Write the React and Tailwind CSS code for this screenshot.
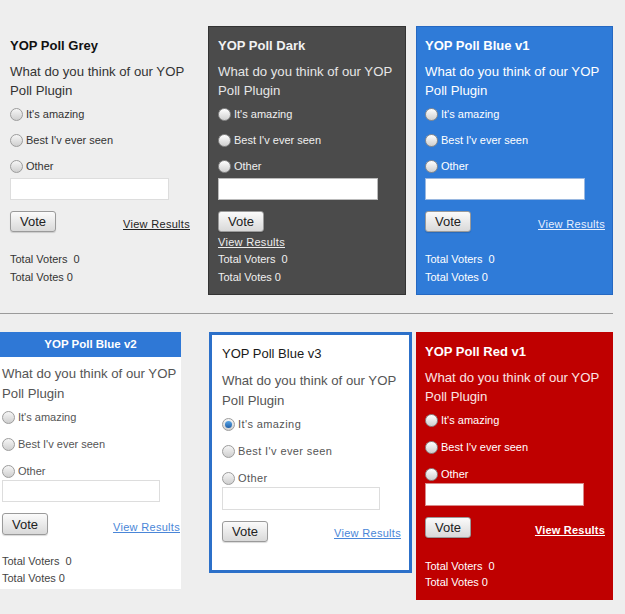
import React from "react";

const OPTS = ["It's amazing", "Best I'v ever seen", "Other"];

function Radio({ light, checked }) {
  return (
    <span
      className={
        light
          ? "flex h-[13px] w-[13px] shrink-0 items-center justify-center rounded-full border border-[#8c8c8c] bg-linear-to-b from-white to-[#cfcfcf]"
          : "flex h-[13px] w-[13px] shrink-0 items-center justify-center rounded-full border border-[#9c9c9c] bg-linear-to-b from-[#f6f6f6] to-[#cfcfcf]"
      }
    >
      {checked ? (
        <span className="h-[7px] w-[7px] rounded-full bg-linear-to-b from-[#5aa6e6] to-[#1f5fa8]" />
      ) : null}
    </span>
  );
}

function Options({ wrapCls, textCls, light, checkedFirst }) {
  return (
    <div className={wrapCls}>
      {OPTS.map((o, i) => (
        <div key={o} className="flex h-[16px] items-center gap-[3px]">
          <Radio light={light} checked={checkedFirst && i === 0} />
          <span className={textCls}>{o}</span>
        </div>
      ))}
    </div>
  );
}

function Vote({ cls }) {
  return (
    <button
      className={
        "flex w-[46px] items-center justify-center rounded-[3px] border border-[#9a9a9a] bg-linear-to-b from-[#fbfbfb] to-[#d9d9d9] text-[13px] leading-none text-[#222] shadow-[0_1px_1px_rgba(0,0,0,0.15)] " +
        cls
      }
    >
      Vote
    </button>
  );
}

function Totals({ cls }) {
  return (
    <div className={cls}>
      <div>Total Voters&nbsp; 0</div>
      <div>Total Votes 0</div>
    </div>
  );
}

export default function App() {
  return (
    <div className="h-[614px] w-[625px] overflow-hidden bg-[#eeeeee] pt-[26px] font-['Liberation_Sans',Arial,sans-serif]">
      {/* Row 1 */}
      <div className="flex items-start">
        {/* Grey */}
        <div className="w-[198px] pb-[9px] pl-[10px] pr-[8px] pt-[12px]">
          <div className="text-[13px] font-bold leading-[16px] text-[#111]">YOP Poll Grey</div>
          <div className="mt-[8px] text-[13.2px] leading-[19px] text-[#333]">
            What do you think of our YOP Poll Plugin
          </div>
          <Options
            wrapCls="mt-[6px] flex flex-col gap-[10px]"
            textCls="text-[11px] text-[#333]"
          />
          <div className="mt-[4px] h-[22px] w-[159px] border border-[#dddddd] bg-white" />
          <div className="mt-[11px] flex h-[21px] items-center justify-between">
            <Vote cls="h-[21px]" />
            <span className="mt-[5px] text-[11px] leading-[16px] tracking-[0.3px] text-[#222] underline">View Results</span>
          </div>
          <Totals cls="mt-[18px] text-[11px] leading-[18px] text-[#333]" />
        </div>

        {/* Dark */}
        <div className="ml-[10px] w-[198px] border border-[#333333] bg-[#4b4b4b] pb-[8px] pl-[9px] pr-[8px] pt-[11px]">
          <div className="text-[13px] font-bold leading-[16px] text-[#f2f2f2]">YOP Poll Dark</div>
          <div className="mt-[8px] text-[13.2px] leading-[19px] text-[#e6e6e6]">
            What do you think of our YOP Poll Plugin
          </div>
          <Options
            light
            wrapCls="mt-[6px] flex flex-col gap-[10px]"
            textCls="text-[11px] text-[#f0f0f0]"
          />
          <div className="mt-[4px] h-[22px] w-[160px] border border-[#bbbbbb] bg-white" />
          <Vote cls="mt-[11px] h-[21px]" />
          <div className="mt-[2px] text-[11px] leading-[16px] tracking-[0.3px] text-[#eeeeee] underline">
            View Results
          </div>
          <Totals cls="text-[11px] leading-[18px] text-[#f0f0f0]" />
        </div>

        {/* Blue v1 */}
        <div className="ml-[10px] w-[197px] border border-[#2568c2] bg-[#2f7bd8] pb-[8px] pl-[8px] pr-[7px] pt-[11px]">
          <div className="text-[13px] font-bold leading-[16px] text-white">YOP Poll Blue v1</div>
          <div className="mt-[8px] text-[13.2px] leading-[19px] text-white">
            What do you think of our YOP Poll Plugin
          </div>
          <Options
            light
            wrapCls="mt-[6px] flex flex-col gap-[10px]"
            textCls="text-[11px] text-white"
          />
          <div className="mt-[4px] h-[22px] w-[160px] border border-[#9ab8e0] bg-white" />
          <div className="mt-[11px] flex h-[21px] items-center justify-between">
            <Vote cls="h-[21px]" />
            <span className="mt-[5px] text-[11px] leading-[16px] tracking-[0.3px] text-[#e8f0ff] underline">View Results</span>
          </div>
          <Totals cls="mt-[18px] text-[11px] leading-[18px] text-white" />
        </div>
      </div>

      {/* Divider */}
      <div className="mt-[18px] h-px w-[613px] bg-[#9a9a9a]" />

      {/* Row 2 */}
      <div className="mt-[18px] flex items-start">
        {/* Blue v2 */}
        <div className="w-[181px] bg-white pb-[2px]">
          <div className="flex h-[25px] items-center justify-center bg-[#2f78d6] text-[11.5px] font-bold text-white">
            YOP Poll Blue v2
          </div>
          <div className="pl-[2px] pr-[1px]">
            <div className="mt-[7px] text-[13.2px] leading-[20px] text-[#555]">
              What do you think of our YOP Poll Plugin
            </div>
            <Options
              wrapCls="mt-[5px] flex flex-col gap-[11px]"
              textCls="text-[11px] text-[#555]"
            />
            <div className="mt-[1px] h-[22px] w-[158px] border border-[#dddddd] bg-white" />
            <div className="mt-[11px] flex h-[22px] items-center justify-between">
              <Vote cls="h-[22px] w-[44px]" />
              <span className="mt-[5px] text-[11px] leading-[16px] tracking-[0.3px] text-[#4a86d8] underline">
                View Results
              </span>
            </div>
            <Totals cls="mt-[18px] text-[11px] leading-[17px] text-[#444]" />
          </div>
        </div>

        {/* Blue v3 */}
        <div className="ml-[28px] w-[203px] border-[3px] border-[#2c70c9] bg-white pb-[28px] pl-[10px] pr-[8px] pt-[11px]">
          <div className="text-[13px] leading-[16px] text-[#1a1a1a]">YOP Poll Blue v3</div>
          <div className="mt-[9px] text-[13.2px] leading-[20px] text-[#555]">
            What do you think of our YOP Poll Plugin
          </div>
          <Options
            checkedFirst
            wrapCls="mt-[5px] flex flex-col gap-[11px]"
            textCls="text-[11px] tracking-[0.4px] text-[#555]"
          />
          <div className="mt-[1px] h-[23px] w-[158px] border border-[#dddddd] bg-white" />
          <div className="mt-[11px] flex h-[21px] items-center justify-between">
            <Vote cls="h-[21px] w-[45px]" />
            <span className="mt-[3px] text-[11px] leading-[16px] tracking-[0.3px] text-[#4a86d8] underline">View Results</span>
          </div>
        </div>

        {/* Red v1 */}
        <div className="ml-[4px] w-[197px] bg-[#bf0000] pb-[10px] pl-[9px] pr-[8px] pt-[12px]">
          <div className="text-[13px] font-bold leading-[16px] text-white">YOP Poll Red v1</div>
          <div className="mt-[8px] text-[13.2px] leading-[19px] text-[#fbe4e4]">
            What do you think of our YOP Poll Plugin
          </div>
          <Options
            light
            wrapCls="mt-[6px] flex flex-col gap-[11px]"
            textCls="text-[11px] text-white"
          />
          <div className="mt-[1px] h-[23px] w-[159px] border border-[#d98a8a] bg-white" />
          <div className="mt-[11px] flex h-[21px] items-center justify-between">
            <Vote cls="h-[21px] w-[45px]" />
            <span className="mt-[4px] text-[11px] font-bold leading-[16px] tracking-[0.2px] text-white underline">View Results</span>
          </div>
          <Totals cls="mt-[20px] text-[11px] leading-[16px] text-white" />
        </div>
      </div>
    </div>
  );
}
